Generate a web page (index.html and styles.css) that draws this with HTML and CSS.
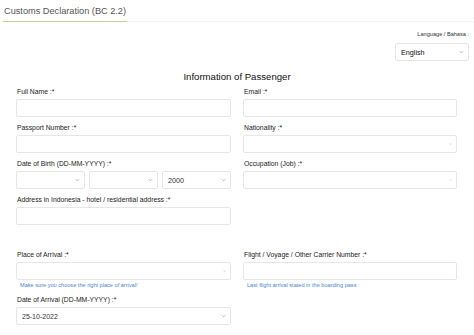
FILE: index.html
```html
<!DOCTYPE html>
<html lang="en">
<head>
  <meta charset="UTF-8">
  <meta name="viewport" content="width=device-width, initial-scale=1.0">
  <title>Customs Declaration (BC 2.2)</title>
  <link rel="stylesheet" href="styles.css">
</head>
<body>
  <div class="topbar">
    <span class="tab">Customs Declaration (BC 2.2)</span>
  </div>

  <div class="lang">
    <label for="lang">Language / Bahasa :</label>
    <div class="select lang-select">
      <select id="lang">
        <option>English</option>
        <option>Bahasa Indonesia</option>
      </select>
      <svg class="chev" viewBox="0 0 6 4"><path d="M1 1l2 2 2-2" /></svg>
    </div>
  </div>

  <h1>Information of Passenger</h1>

  <form class="grid">
    <div class="field">
      <label for="fullname">Full Name :*</label>
      <input type="text" id="fullname">
    </div>
    <div class="field">
      <label for="email">Email :*</label>
      <input type="text" id="email">
    </div>

    <div class="field">
      <label for="passport">Passport Number :*</label>
      <input type="text" id="passport">
    </div>
    <div class="field">
      <label for="nation">Nationality :*</label>
      <div class="select">
        <select id="nation"><option></option></select>
        <svg class="chev tiny" viewBox="0 0 6 4"><path d="M1 1l2 2 2-2" /></svg>
      </div>
    </div>

    <div class="field">
      <label for="day">Date of Birth (DD-MM-YYYY) :*</label>
      <div class="dob">
        <div class="select">
          <select id="day"><option></option></select>
          <svg class="chev" viewBox="0 0 6 4"><path d="M1 1l2 2 2-2" /></svg>
        </div>
        <div class="select">
          <select id="month"><option></option></select>
          <svg class="chev" viewBox="0 0 6 4"><path d="M1 1l2 2 2-2" /></svg>
        </div>
        <div class="select">
          <select id="year"><option>2000</option></select>
          <svg class="chev" viewBox="0 0 6 4"><path d="M1 1l2 2 2-2" /></svg>
        </div>
      </div>
    </div>
    <div class="field">
      <label for="job">Occupation (Job) :*</label>
      <div class="select">
        <select id="job"><option></option></select>
        <svg class="chev tiny" viewBox="0 0 6 4"><path d="M1 1l2 2 2-2" /></svg>
      </div>
    </div>

    <div class="field address">
      <label for="address">Address in Indonesia - hotel / residential address :*</label>
      <input type="text" id="address">
    </div>
    <div></div>

    <div class="field">
      <label for="place">Place of Arrival :*</label>
      <div class="select">
        <select id="place"><option></option></select>
        <svg class="chev tiny" viewBox="0 0 6 4"><path d="M1 1l2 2 2-2" /></svg>
      </div>
      <small>Make sure you choose the right place of arrival!</small>
    </div>
    <div class="field">
      <label for="flight">Flight / Voyage / Other Carrier Number :*</label>
      <input type="text" id="flight">
      <small>Last flight arrival stated in the boarding pass</small>
    </div>

    <div class="field">
      <label for="arrival">Date of Arrival (DD-MM-YYYY) :*</label>
      <div class="select">
        <input type="text" id="arrival" value="25-10-2022">
        <svg class="chev" viewBox="0 0 6 4"><path d="M1 1l2 2 2-2" /></svg>
      </div>
    </div>
  </form>
</body>
</html>
```

FILE: styles.css
```css
body {
  margin: 0;
  font-family: "Liberation Sans", Arial, sans-serif;
  color: #222;
  background: #fff;
}
.topbar {
  height: 21px;
  border-bottom: 1px solid #f3f3f3;
  padding-left: 3px;
}
.tab {
  display: inline-block;
  font-size: 9.2px;
  line-height: 20px;
  color: #555;
  border-bottom: 1.5px solid #c8cd9f;
  padding: 0 1px;
}
.lang {
  display: flex;
  flex-direction: column;
  align-items: flex-end;
  padding-right: 5px;
  margin-top: 8px;
}
.lang label {
  font-size: 5.6px;
  line-height: 8px;
  color: #333;
}
.lang-select {
  width: 74px;
  margin-top: 5px;
}
.lang-select select {
  font-size: 7.2px;
  color: #111;
  padding-left: 5px;
}
h1 {
  margin: 10px 0 0;
  text-align: center;
  font-size: 9.6px;
  line-height: 12px;
  font-weight: normal;
  color: #111;
}
.grid {
  display: grid;
  grid-template-columns: 215px 214px;
  column-gap: 12px;
  padding: 0 17px 0 16px;
  margin-top: 4px;
}
.field {
  display: flex;
  flex-direction: column;
  margin-bottom: 6px;
}
.field label {
  font-size: 6.8px;
  line-height: 10px;
  margin-bottom: 2px;
  padding-left: 1px;
  color: #222;
}
.address {
  margin-bottom: 25px;
}
input, select {
  display: block;
  box-sizing: border-box;
  width: 100%;
  height: 18px;
  margin: 0;
  border: 1px solid #e6e6e6;
  border-radius: 2px;
  background: #fff;
  font-family: inherit;
  font-size: 7px;
  color: #333;
  padding: 0 5px;
  outline: none;
}
select {
  appearance: none;
  -webkit-appearance: none;
}
.select {
  position: relative;
}
.chev {
  position: absolute;
  right: 5px;
  top: 7px;
  width: 5px;
  height: 4px;
  fill: none;
  stroke: #999;
  stroke-width: 0.8;
}
.chev.tiny {
  width: 3px;
  height: 2px;
  top: 8px;
}
.dob {
  display: grid;
  grid-template-columns: repeat(3, 1fr);
  gap: 4px;
}
.dob select {
  font-size: 7.2px;
}
small {
  font-size: 5.6px;
  line-height: 8px;
  margin-top: 1px;
  padding-left: 4px;
  color: #4a85d6;
}
```
